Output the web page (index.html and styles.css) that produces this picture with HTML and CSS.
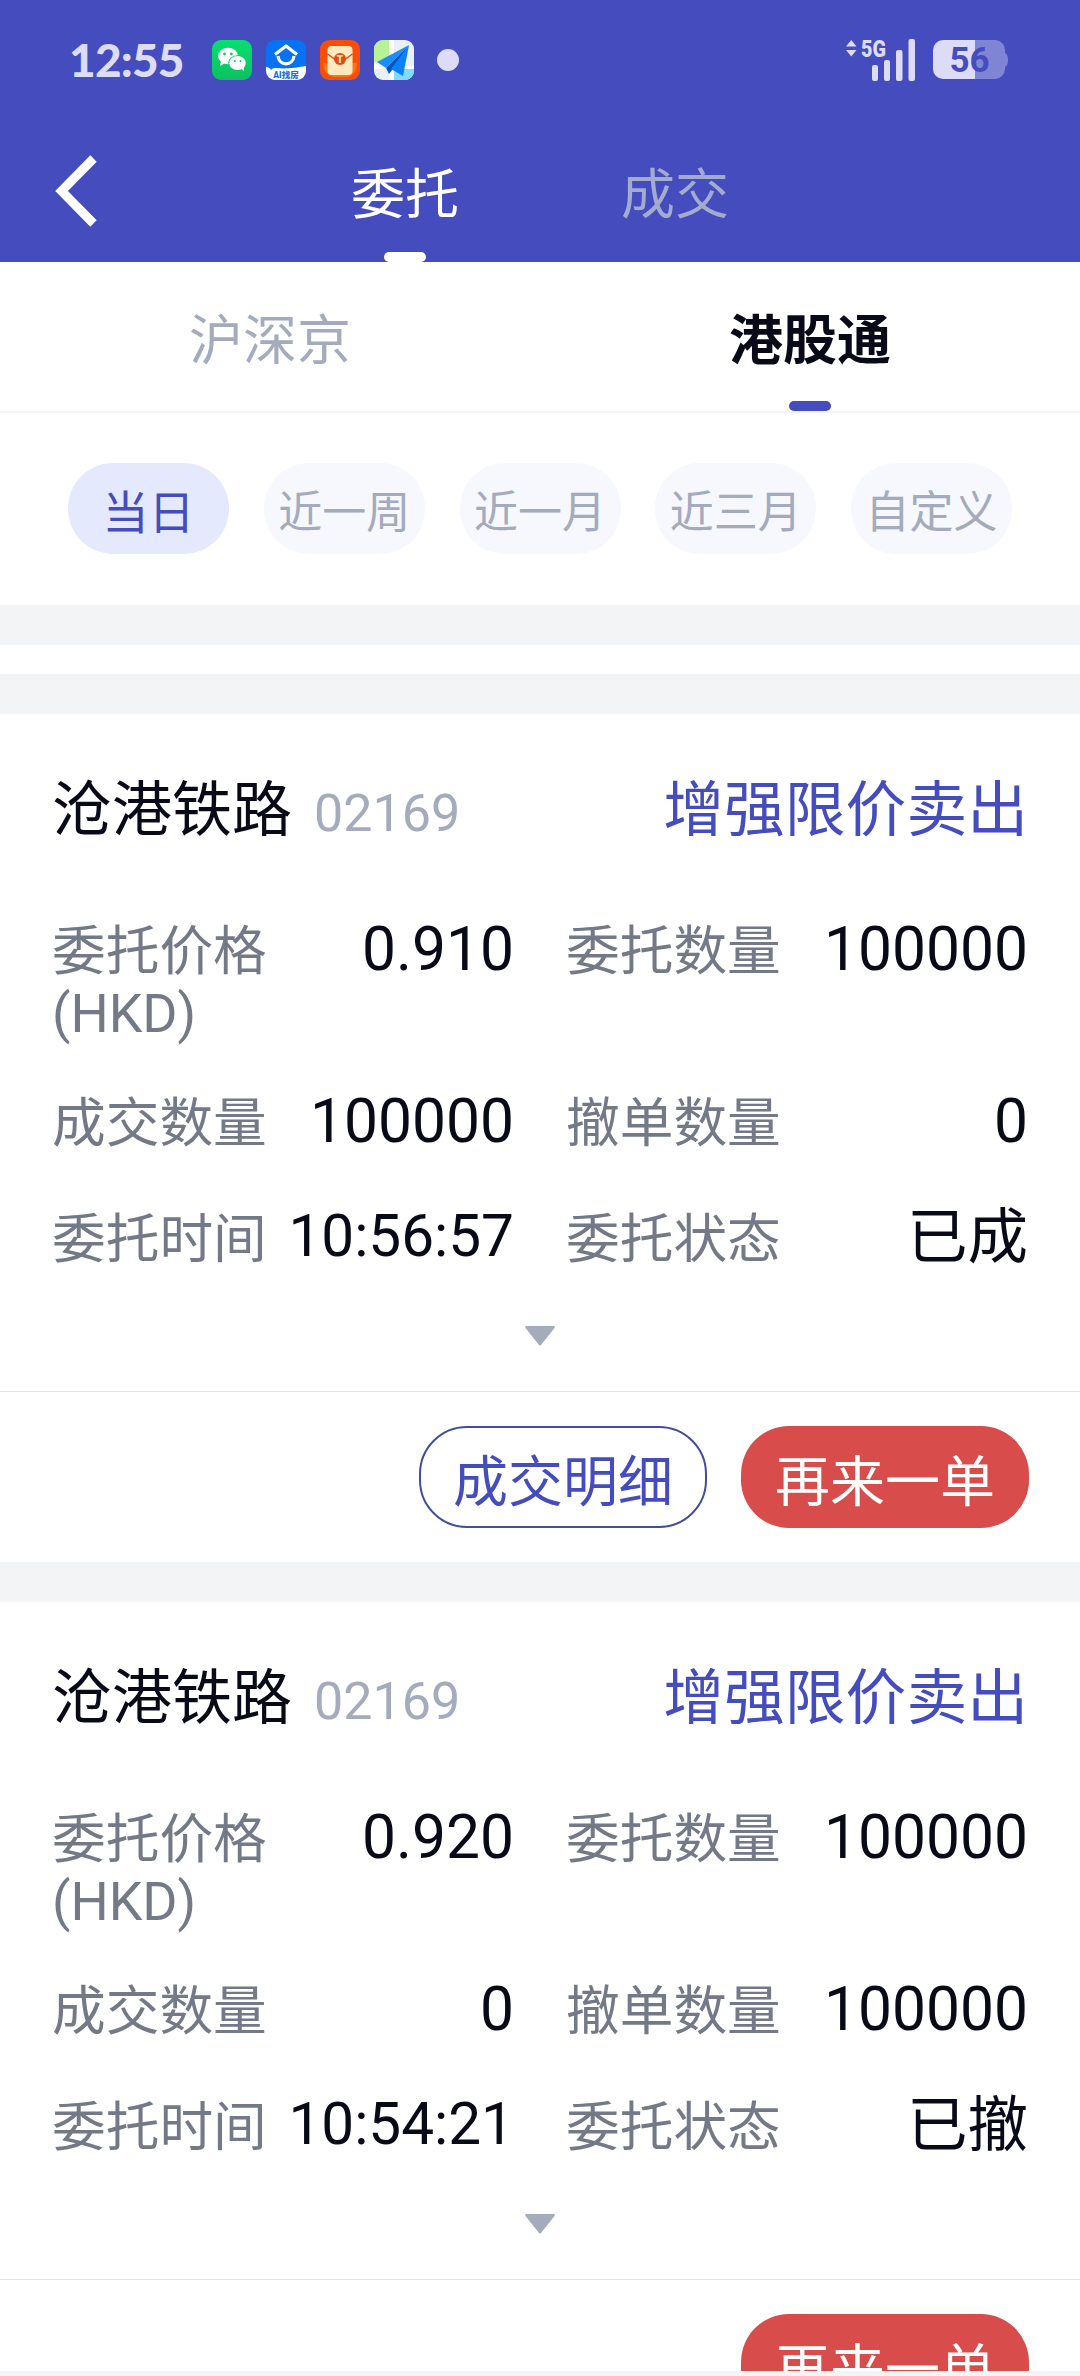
FILE: index.html
```
<!DOCTYPE html>
<html lang="zh-CN">
<head>
<meta charset="UTF-8">
<meta name="viewport" content="width=device-width, initial-scale=1.0">
<title>委托</title>
<link rel="stylesheet" href="styles.css">
</head>
<body>

<div class="page">
  <header class="header">
    <div class="status-bar">
      <span class="time">12:55</span>
      <div class="app-icons">
        <!-- WeChat -->
        <svg width="40" height="40" viewBox="0 0 40 40">
          <defs><linearGradient id="wx" x1="0" y1="0" x2="0" y2="1"><stop offset="0" stop-color="#06e070"/><stop offset="1" stop-color="#0cc160"/></linearGradient></defs>
          <rect width="40" height="40" rx="9" fill="url(#wx)"/>
          <path d="M9 21l-1 5 5-3z" fill="#fff"/>
          <ellipse cx="16" cy="16" rx="10" ry="8.2" fill="#fff"/>
          <ellipse cx="25.5" cy="23" rx="9.3" ry="7.8" fill="#0bcf67"/>
          <ellipse cx="25.5" cy="23" rx="8.3" ry="6.9" fill="#fff"/>
          <path d="M28 28l4 3-.5-5z" fill="#fff"/>
          <circle cx="12.5" cy="14" r="1.4" fill="#0bcf67"/>
          <circle cx="19.3" cy="14" r="1.4" fill="#0bcf67"/>
          <circle cx="22.8" cy="21" r="1.1" fill="#0bcf67"/>
          <circle cx="28.5" cy="21" r="1.1" fill="#0bcf67"/>
        </svg>
        <!-- house finder -->
        <svg width="40" height="40" viewBox="0 0 40 40">
          <defs><clipPath id="tile"><rect width="40" height="40" rx="9"/></clipPath></defs>
          <g clip-path="url(#tile)">
            <rect width="40" height="40" fill="#0872f5"/>
            <path d="M0 27q4 .3 5 3 1-2 4-2 15 1.600 31-2v14H0z" fill="#fff"/>
            <path d="M9 14.500L20 6l11 8.500" fill="none" stroke="#fff" stroke-width="3.200" stroke-linejoin="round"/>
            <path d="M12 16c1 10.500 15 10.500 16 0" fill="none" stroke="#fff" stroke-width="3.200"/>
            <text class="tile-text" x="20" y="37.500" text-anchor="middle" fill="#1672dc">AI找房</text>
          </g>
        </svg>
        <!-- red packet -->
        <svg width="40" height="40" viewBox="0 0 40 40">
          <rect width="40" height="40" rx="9" fill="#f94d08"/>
          <path d="M3 23c0 8 5 13 11 14h12c7-1 11-6 11-14" fill="#ff7416"/>
          <rect x="7.500" y="6" width="25" height="29" rx="4" fill="#ffe9c0"/>
          <path d="M7.500 14L16 20h8l8.500-6" fill="none" stroke="#d9531a" stroke-width="1.500"/>
          <circle cx="20" cy="19" r="6" fill="#dc4e12"/>
          <text class="seal-text" x="20" y="22.800" text-anchor="middle" fill="#ffe9c0">T</text>
        </svg>
        <!-- map -->
        <svg width="40" height="40" viewBox="0 0 40 40">
          <g clip-path="url(#tile)">
            <rect width="40" height="40" fill="#e9f1f6"/>
            <path d="M0 0h15v22H0z" fill="#b8f295"/>
            <path d="M20 29h20v11H20z" fill="#7fdcff"/>
            <path d="M15 0h5v40h-5zM0 24l20 2 20 0v3H0z" fill="#fff"/>
            <path d="M35 5L3 22l9 6z" fill="#1c8dff"/>
            <path d="M35 5L12 28l3 6 3-4z" fill="#0554bd"/>
            <path d="M35 5L17 29l12 7z" fill="#0a80fb"/>
          </g>
        </svg>
      </div>
      <span class="dot"></span>
      <svg class="signal" width="69" height="58" viewBox="0 -8 69 58" fill="#dcdcf6">
        <path d="M0 7.500L5.250 1l5.250 6.500zM0 11h10.500L5.250 17.500z"/>
        <text class="net-text" x="15" y="18" textLength="25" lengthAdjust="spacingAndGlyphs">5G</text>
        <rect x="26" y="26" width="6" height="16" rx="2"/>
        <rect x="38" y="21" width="6" height="21" rx="2"/>
        <rect x="50" y="11" width="6.500" height="31" rx="2"/>
        <rect x="62.500" y="0" width="6.500" height="42" rx="2"/>
      </svg>
      <svg class="battery" width="76" height="40" viewBox="0 0 76 40">
        <path d="M42 0h20a10 10 0 0 1 10 10v3c4 1 4 13 0 14v2a10 10 0 0 1-10 10H42z" fill="#8084d4"/>
        <path d="M10 0h32v39H10A10 10 0 0 1 0 29V10A10 10 0 0 1 10 0z" fill="#dcdcf6"/>
        <text class="battery-text" x="36.500" y="32" text-anchor="middle" fill="#444cbe">56</text>
      </svg>
    </div>
    <div class="nav">
      <svg class="back" width="44" height="74" viewBox="0 0 44 74">
        <path d="M38.500 4.500L6.500 37l32 32.500" fill="none" stroke="#fff" stroke-width="9"/>
      </svg>
      <div class="nav-tabs">
        <div class="nav-tab active">委托</div>
        <div class="nav-tab">成交</div>
      </div>
    </div>
  </header>

  <main class="content">
    <div class="market-tabs">
      <div class="market-tab">沪深京</div>
      <div class="market-tab active">港股通</div>
    </div>
    <div class="ranges">
      <button class="range active">当日</button>
      <button class="range">近一周</button>
      <button class="range">近一月</button>
      <button class="range">近三月</button>
      <button class="range">自定义</button>
    </div>
    <div class="band"></div>
    <div class="spacer"></div>
    <div class="band"></div>

    <section class="order">
      <div class="order-head">
        <span class="stock-name">沧港铁路</span>
        <span class="stock-code">02169</span>
        <span class="order-type">增强限价卖出</span>
      </div>
      <div class="fields">
        <div class="field"><span class="label">委托价格<br>(HKD)</span><span class="value">0.910</span></div>
        <div class="field"><span class="label">委托数量</span><span class="value">100000</span></div>
        <div class="field"><span class="label">成交数量</span><span class="value">100000</span></div>
        <div class="field"><span class="label">撤单数量</span><span class="value">0</span></div>
        <div class="field last"><span class="label">委托时间</span><span class="value clock">10:56:57</span></div>
        <div class="field last"><span class="label">委托状态</span><span class="value">已成</span></div>
      </div>
      <svg class="expand" width="30" height="20" viewBox="0 0 30 20"><path d="M1 0h28q1.500.5.500 2L16 19q-1 1-2 0L.5 2Q-.5.500 1 0z" fill="#a3abbd"/></svg>
      <div class="actions">
        <button class="btn outline">成交明细</button>
        <button class="btn primary">再来一单</button>
      </div>
    </section>
    <div class="band"></div>

    <section class="order">
      <div class="order-head">
        <span class="stock-name">沧港铁路</span>
        <span class="stock-code">02169</span>
        <span class="order-type">增强限价卖出</span>
      </div>
      <div class="fields">
        <div class="field"><span class="label">委托价格<br>(HKD)</span><span class="value">0.920</span></div>
        <div class="field"><span class="label">委托数量</span><span class="value">100000</span></div>
        <div class="field"><span class="label">成交数量</span><span class="value">0</span></div>
        <div class="field"><span class="label">撤单数量</span><span class="value">100000</span></div>
        <div class="field last"><span class="label">委托时间</span><span class="value clock">10:54:21</span></div>
        <div class="field last"><span class="label">委托状态</span><span class="value">已撤</span></div>
      </div>
      <svg class="expand" width="30" height="20" viewBox="0 0 30 20"><path d="M1 0h28q1.500.5.500 2L16 19q-1 1-2 0L.5 2Q-.5.500 1 0z" fill="#a3abbd"/></svg>
      <div class="actions">
        <button class="btn primary">再来一单</button>
      </div>
    </section>
  </main>
  <div class="bottom-strip"></div>
</div>

</body>
</html>
```
FILE: styles.css
```
* {
  box-sizing: border-box;
}
body {
  margin: 0;
  font-family: Roboto, "Noto Sans CJK SC", sans-serif;
  color: #090a17;
  background-color: #fff;
}
button {
  margin: 0;
  padding: 0;
  border: none;
  font-family: inherit;
}
svg {
  display: block;
  flex: none;
}
.page {
  display: flex;
  flex-direction: column;
  width: 1080px;
  height: 2376px;
  overflow: hidden;
}

/* header */
.header {
  flex: none;
  height: 262px;
  background-color: #444cbe;
}
.status-bar {
  display: flex;
  align-items: center;
  height: 120px;
  padding: 0 71px 0 69px;
}
.time {
  width: 143px;
  padding-bottom: 1px;
  font-family: Lato, sans-serif;
  font-size: 46px;
  font-weight: 900;
  line-height: 56px;
  letter-spacing: -0.8px;
  color: #dcdcf6;
}
.app-icons {
  display: flex;
  gap: 14px;
}
.tile-text {
  font: 900 8.500px Roboto, "Noto Sans CJK SC", sans-serif;
}
.seal-text {
  font: 900 10px Roboto, sans-serif;
}
.dot {
  width: 22px;
  height: 22px;
  margin-left: 23px;
  border-radius: 50%;
  background-color: #dcdcf6;
}
.signal {
  margin-left: auto;
}
.net-text {
  font: 900 24px Roboto, sans-serif;
}
.battery {
  margin-left: 18px;
}
.battery-text {
  font: 700 35px Roboto, sans-serif;
}
.nav {
  display: flex;
  height: 142px;
  padding-left: 55px;
}
.back {
  margin-top: 34px;
}
.nav-tabs {
  display: flex;
  width: 540px;
  margin-left: 171px;
}
.nav-tab {
  display: flex;
  flex-direction: column;
  align-items: center;
  justify-content: space-between;
  width: 270px;
  padding-top: 45px;
  font-size: 54px;
  line-height: 62px;
  color: #a3abce;
}
.nav-tab.active {
  color: #fff;
}
.nav-tab.active::after,
.market-tab.active::after {
  content: "";
  width: 42px;
  height: 10px;
  border-radius: 5px;
  background-color: #fff;
}

/* content */
.content {
  flex: 1;
  min-height: 0;
  overflow: hidden;
}
.market-tabs {
  display: flex;
  height: 151px;
  border-bottom: 2px solid #f3f4f6;
}
.market-tab {
  display: flex;
  flex-direction: column;
  align-items: center;
  justify-content: space-between;
  width: 540px;
  padding-top: 49px;
  font-size: 54px;
  line-height: 62px;
  color: #a3abbd;
}
.market-tab.active {
  font-weight: 700;
  color: #090a17;
}
.market-tab.active::after {
  background-color: #444cbe;
}
.ranges {
  display: flex;
  justify-content: space-between;
  height: 192px;
  padding: 50px 68px 0;
}
.range {
  width: 161px;
  height: 91px;
  border-radius: 45px;
  font-size: 44px;
  color: #a3abbd;
  background-color: #f6f8fd;
}
.range.active {
  font-size: 46px;
  color: #444cbe;
  background-color: #e5e9fe;
}
.band {
  height: 40px;
  background-color: #f3f4f6;
}
.spacer {
  height: 29px;
}

/* order card */
.order {
  padding-top: 61px;
}
.order-head {
  display: flex;
  align-items: baseline;
  height: 72px;
  padding: 0 52px;
  line-height: 72px;
  font-size: 60px;
}
.stock-code {
  margin-left: 22px;
  font-size: 52px;
  line-height: 70px;
  color: #a3abbd;
}
.order-type {
  margin-left: auto;
  font-size: 60.8px;
  color: #444cbe;
}
.fields {
  display: grid;
  grid-template-columns: 1fr 1fr;
  column-gap: 52px;
  row-gap: 48px;
  margin-top: 74px;
  padding: 0 52px;
}
.field {
  display: flex;
  justify-content: space-between;
}
.field.last {
  margin-top: 6px;
}
.label {
  font-size: 53.7px;
  line-height: 62px;
  color: #737986;
}
.value {
  font-size: 60.5px;
  line-height: 58px;
}
.value.clock {
  font-size: 58.5px;
  line-height: 54px;
}
.expand {
  margin: 55px auto 45px;
}
.actions {
  display: flex;
  justify-content: flex-end;
  gap: 34px;
  height: 171px;
  padding: 34px 51px 0;
  border-top: 1px solid #e3e4e6;
}
.btn {
  width: 288px;
  height: 102px;
  border-radius: 48px;
  font-size: 55px;
}
.btn.outline {
  border: 2px solid #444c9e;
  color: #444cbe;
  background-color: #fff;
}
.btn.primary {
  color: #fff;
  background-color: #d84c4b;
}
.bottom-strip {
  flex: none;
  height: 5px;
  background-color: #f3f4f6;
}
```
